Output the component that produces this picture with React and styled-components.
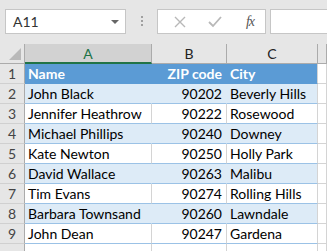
import React from 'react'
import styled, { createGlobalStyle } from 'styled-components'

const GlobalStyle = createGlobalStyle`
    html, body {
        margin: 0;
        padding: 0;
        background: #ffffff;
        overflow: hidden;
    }
    body {
        font-family: Lato, "Liberation Sans", sans-serif;
    }
`;

const Window = styled.div`
    width: 327px;
    height: 251px;
    overflow: hidden;
    background: #e6e6e6;
`;

const FormulaBar = styled.div`
    display: flex;
    align-items: flex-end;
    height: 44px;
    padding: 0 0 10px 5px;
    box-sizing: border-box;
`;

const NameBox = styled.div`
    display: flex;
    align-items: center;
    justify-content: space-between;
    width: 121px;
    height: 25px;
    box-sizing: border-box;
    padding: 0 6px 0 7px;
    background: #ffffff;
    border: 1px solid #c6c6c6;
    font-size: 14px;
    color: #333333;
`;

const Caret = styled.span`
    width: 0;
    height: 0;
    border-left: 4px solid transparent;
    border-right: 4px solid transparent;
    border-top: 4px solid #666666;
`;

const Grip = styled.div`
    width: 31px;
    display: flex;
    flex-direction: column;
    align-items: center;
    gap: 2px;
    padding-bottom: 8px;

    & > span {
        width: 2px;
        height: 2px;
        background: #a0a0a0;
    }
`;

const ButtonGroup = styled.div`
    display: flex;
    align-items: center;
    width: 109px;
    height: 25px;
    box-sizing: border-box;
    background: #ffffff;
    border: 1px solid #c6c6c6;
    padding-left: 13px;
    gap: 17px;
`;

const ToolIcon = styled.span`
    display: flex;
    width: 18px;
    justify-content: center;
    color: ${({ $active }) => ($active ? '#555555' : '#b8b8b8')};
`;

const Fx = styled.span`
    font-family: "Liberation Serif", serif;
    font-style: italic;
    font-size: 14px;
    color: #555555;
    letter-spacing: -1px;
`;

const FormulaInput = styled.div`
    flex: 1;
    height: 25px;
    margin-left: 4px;
    box-sizing: border-box;
    background: #ffffff;
    border: 1px solid #c6c6c6;
    border-right: none;
`;

const Sheet = styled.div`
    display: grid;
    grid-template-columns: 25px 127px 75px 91px 1fr;
    grid-auto-rows: 20px;
    font-size: 14px;
`;

const Corner = styled.div`
    position: relative;
    background: #e6e6e6;
    border-right: 1px solid #ababab;
    border-bottom: 1px solid #ababab;
    box-sizing: border-box;

    &::after {
        content: '';
        position: absolute;
        right: 3px;
        bottom: 3px;
        width: 0;
        height: 0;
        border-left: 12px solid transparent;
        border-bottom: 12px solid #b9b9b9;
    }
`;

const ColHeader = styled.div`
    display: flex;
    align-items: center;
    justify-content: center;
    box-sizing: border-box;
    background: ${({ $selected }) => ($selected ? '#d2d2d2' : '#e6e6e6')};
    color: ${({ $selected }) => ($selected ? '#217346' : '#222222')};
    border-right: 1px solid #ababab;
    border-bottom: ${({ $selected }) => ($selected ? '2px solid #217346' : '1px solid #ababab')};
    padding-top: ${({ $selected }) => ($selected ? '1px' : '0')};
`;

const RowHeader = styled.div`
    display: flex;
    align-items: center;
    justify-content: center;
    box-sizing: border-box;
    background: #e6e6e6;
    color: #444444;
    border-right: 1px solid #ababab;
    border-bottom: 1px solid #d0d0d0;
`;

const fills = {
    head: '#5b9bd5',
    band: '#ddebf7',
    plain: '#ffffff',
};

const Cell = styled.div`
    display: flex;
    align-items: center;
    justify-content: ${({ $right }) => ($right ? 'flex-end' : 'flex-start')};
    padding: 0 4px 0 3px;
    box-sizing: border-box;
    white-space: nowrap;
    overflow: hidden;
    background: ${({ $fill }) => fills[$fill]};
    color: ${({ $fill }) => ($fill === 'head' ? '#ffffff' : '#000000')};
    font-weight: ${({ $fill }) => ($fill === 'head' ? 700 : 400)};
    border-bottom: 1px solid ${({ $fill }) => ($fill === 'head' ? '#5b9bd5' : '#9bc2e6')};
    border-right: 1px solid ${({ $fill, $last }) =>
        $last ? '#d4d4d4' : $fill === 'plain' ? '#d4d4d4' : fills[$fill]};
`;

const EmptyCell = styled.div`
    background: #ffffff;
    box-sizing: border-box;
    border-right: 1px solid #d4d4d4;
    border-bottom: 1px solid #d4d4d4;
`;

const people = [
    ['John Black', '90202', 'Beverly Hills'],
    ['Jennifer Heathrow', '90222', 'Rosewood'],
    ['Michael Phillips', '90240', 'Downey'],
    ['Kate Newton', '90250', 'Holly Park'],
    ['David Wallace', '90263', 'Malibu'],
    ['Tim Evans', '90274', 'Rolling Hills'],
    ['Barbara Townsand', '90260', 'Lawndale'],
    ['John Dean', '90247', 'Gardena'],
];

const CrossIcon = () => (
    <svg width="12" height="12" viewBox="0 0 12 12">
        <path d="M1 1 L11 11 M11 1 L1 11" stroke="currentColor" strokeWidth="1.4" fill="none" />
    </svg>
);

const CheckIcon = () => (
    <svg width="14" height="12" viewBox="0 0 14 12">
        <path d="M1 6 L5 10 L13 1" stroke="currentColor" strokeWidth="1.8" fill="none" />
    </svg>
);

const App = () => {
    return (
        <Window>
            <GlobalStyle />
            <FormulaBar>
                <NameBox>
                    A11
                    <Caret />
                </NameBox>
                <Grip>
                    <span />
                    <span />
                    <span />
                </Grip>
                <ButtonGroup>
                    <ToolIcon><CrossIcon /></ToolIcon>
                    <ToolIcon><CheckIcon /></ToolIcon>
                    <ToolIcon $active><Fx>fx</Fx></ToolIcon>
                </ButtonGroup>
                <FormulaInput />
            </FormulaBar>
            <Sheet>
                <Corner />
                <ColHeader $selected>A</ColHeader>
                <ColHeader>B</ColHeader>
                <ColHeader>C</ColHeader>
                <ColHeader />

                <RowHeader>1</RowHeader>
                <Cell $fill="head">Name</Cell>
                <Cell $fill="head" $right>ZIP code</Cell>
                <Cell $fill="head" $last>City</Cell>
                <EmptyCell />

                {people.map(([name, zip, city], i) => {
                    const fill = i % 2 === 0 ? 'band' : 'plain';
                    return (
                        <React.Fragment key={name}>
                            <RowHeader>{i + 2}</RowHeader>
                            <Cell $fill={fill}>{name}</Cell>
                            <Cell $fill={fill} $right>{zip}</Cell>
                            <Cell $fill={fill} $last>{city}</Cell>
                            <EmptyCell />
                        </React.Fragment>
                    );
                })}

                <RowHeader />
                <EmptyCell />
                <EmptyCell />
                <EmptyCell />
                <EmptyCell />
            </Sheet>
        </Window>
    )
}

export default App
